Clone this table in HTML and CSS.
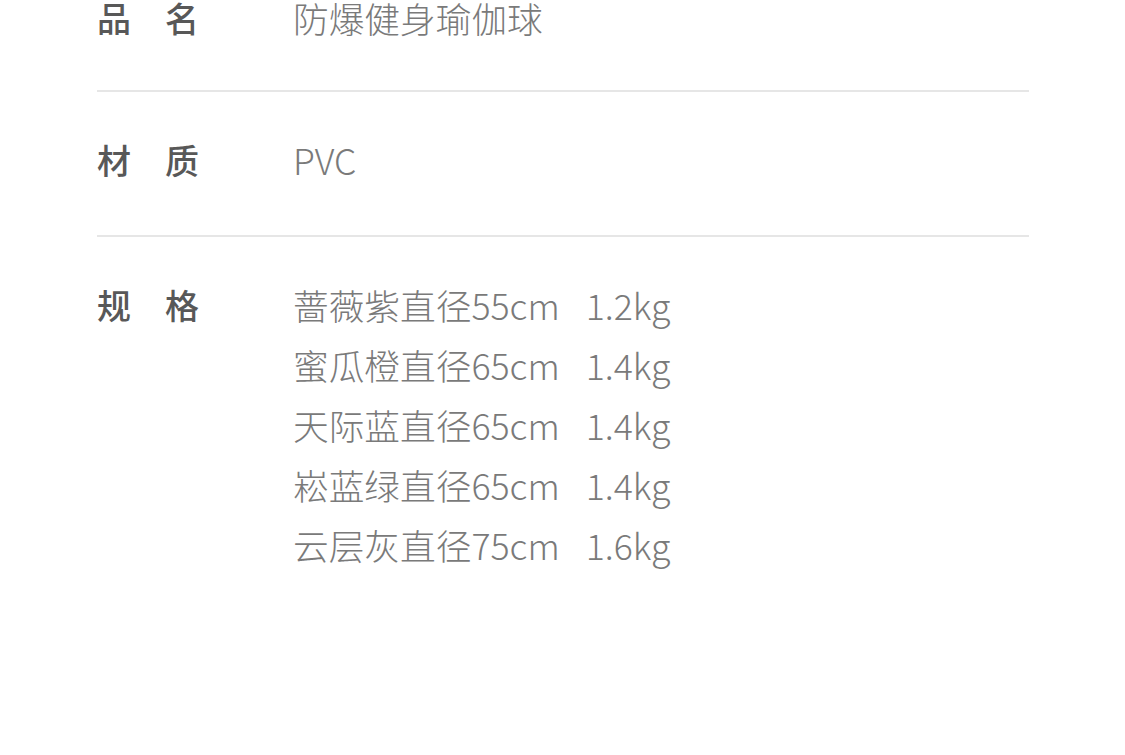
FILE: index.html
```html
<!DOCTYPE html>
<html><head>
  <meta charset="UTF-8">
  <title>产品参数</title>
  <link rel="stylesheet" href="styles.css">
</head><body>
<div id="spec">
  <div class="row first">
    <div class="label">品名</div>
    <div class="value">防爆健身瑜伽球</div>
  </div>
  <div class="row">
    <div class="label">材质</div>
    <div class="value">PVC</div>
  </div>
  <div class="row last">
    <div class="label">规格</div>
    <div class="value">
      <div>蔷薇紫直径55cm<span class="kg">1.2kg</span></div>
      <div>蜜瓜橙直径65cm<span class="kg">1.4kg</span></div>
      <div>天际蓝直径65cm<span class="kg">1.4kg</span></div>
      <div>崧蓝绿直径65cm<span class="kg">1.4kg</span></div>
      <div>云层灰直径75cm<span class="kg">1.6kg</span></div>
    </div>
  </div>
</div>
</body>
</html>
```

FILE: styles.css
```css
html,body{
  margin:0;
  background:#fff;
  height:100%;
  overflow:hidden;
}
#spec{
  margin:-53px 0 0 97px;
  width:932px;
  font-family:"Noto Sans CJK SC","Noto Sans",sans-serif;
}
.row{
  display:flex;
  padding:38px 0 45px;
  border-bottom:2px solid #e6e6e6;
}
.row.first{
  padding:41px 0 42px;
}
.row.last{
  border-bottom:none;
}
.label{
  width:196px;
  flex:none;
  font-size:34px;
  font-weight:500;
  letter-spacing:34px;
  line-height:60px;
  color:#585858;
}
.value{
  font-size:35.7px;
  font-weight:300;
  line-height:60px;
  color:#7a7a7a;
}
.kg{
  margin-left:26px;
}
```
